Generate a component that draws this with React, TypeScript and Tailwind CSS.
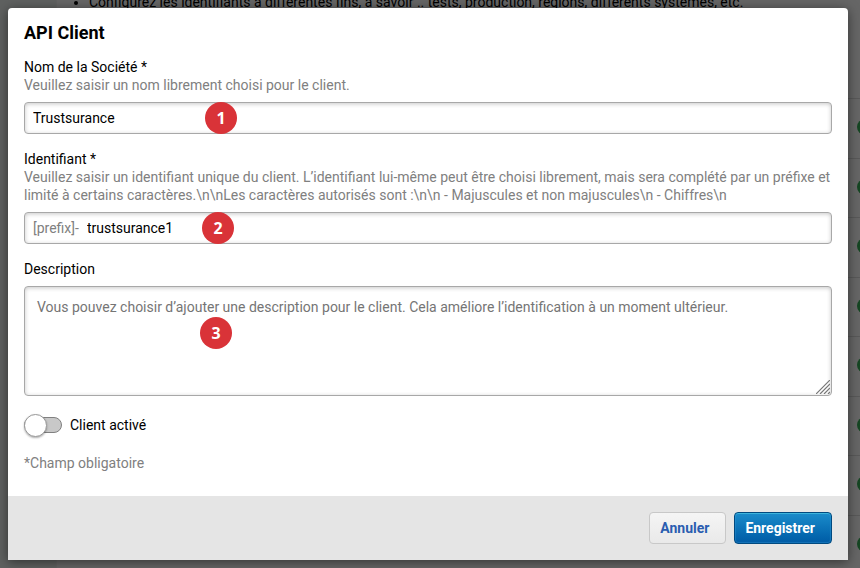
import { useState } from "react";
import type { ReactNode } from "react";

const clients = [1, 2, 3, 4, 5, 6, 7, 8];

const fieldClass =
  "w-full rounded-sm border border-[#a8a8a8] bg-white shadow-[inset_0_1px_4px_rgba(0,0,0,0.22)]";

interface FieldProps {
  id: string;
  label: string;
  help?: string;
  children: ReactNode;
}

const Field = ({ id, label, help, children }: FieldProps) => (
  <div>
    <label htmlFor={id} className="block">
      {label}
    </label>
    {help && <p className="text-[#808080]">{help}</p>}
    <div className="relative mt-2">{children}</div>
  </div>
);

interface StepProps {
  step: number;
  className: string;
}

const Step = ({ step, className }: StepProps) => (
  <span
    className={`absolute flex size-8 items-center justify-center rounded-full bg-[#d93338] font-['Noto_Sans',sans-serif] text-base font-bold text-white ${className}`}
  >
    {step}
  </span>
);

/* Client list behind the dialog */
const ClientList = () => (
  <div className="absolute inset-0 flex overflow-hidden bg-[#edf2ef]">
    <main className="ml-14 flex-1 border-l border-[#f4f4f4] bg-white">
      <ul className="-mt-2 list-disc pl-8 leading-5">
        <li>
          Configurez les identifiants à différentes fins, à savoir .. tests, production, régions,
          differents systèmes, etc.
        </li>
      </ul>
      <ul className="mt-[86px]">
        {clients.map((client) => (
          <li
            key={client}
            className="flex justify-end border-t border-[#dedede] pt-5 odd:h-[60px] even:h-[59px]"
          >
            <span className="-mr-[13px] size-4 shrink-0 rounded-full bg-[#38b058]" />
          </li>
        ))}
      </ul>
    </main>
  </div>
);

const App = () => {
  const [name, setName] = useState("Trustsurance");
  const [identifier, setIdentifier] = useState("trustsurance1");
  const [description, setDescription] = useState("");
  const [active, setActive] = useState(false);

  return (
    <div className="relative min-h-screen font-[Roboto,sans-serif] text-sm leading-[18px] text-black">
      <ClientList />

      <div className="relative min-h-screen overflow-hidden bg-black/60 px-2 pt-2 pr-3">
        <form
          role="dialog"
          aria-labelledby="dialog-title"
          className="rounded-t-sm bg-white shadow-[0_2px_12px_rgba(0,0,0,0.5)]"
          onSubmit={(e) => e.preventDefault()}
        >
          {/* Form fields */}
          <div className="flex flex-col gap-4 px-4 pt-4 pb-6">
            <h2 id="dialog-title" className="text-lg leading-[18px] font-bold">
              API Client
            </h2>

            <Field
              id="name"
              label="Nom de la Société *"
              help="Veuillez saisir un nom librement choisi pour le client."
            >
              <input
                id="name"
                value={name}
                onChange={(e) => setName(e.target.value)}
                className={`${fieldClass} block h-8 px-2`}
              />
              <Step step={1} className="top-0 left-[181px]" />
            </Field>

            <Field
              id="identifier"
              label="Identifiant *"
              help="Veuillez saisir un identifiant unique du client. L’identifiant lui-même peut être choisi librement, mais sera complété par un préfixe et limité à certains caractères.\n\nLes caractères autorisés sont :\n\n - Majuscules et non majuscules\n - Chiffres\n"
            >
              <div className={`${fieldClass} flex h-8 items-center gap-2 px-2`}>
                <span className="text-[#808080]">[prefix]-</span>
                <input
                  id="identifier"
                  value={identifier}
                  onChange={(e) => setIdentifier(e.target.value)}
                  className="min-w-0 flex-1 bg-transparent outline-none"
                />
              </div>
              <Step step={2} className="top-0 left-[178px]" />
            </Field>

            <Field id="description" label="Description">
              <textarea
                id="description"
                value={description}
                onChange={(e) => setDescription(e.target.value)}
                placeholder="Vous pouvez choisir d’ajouter une description pour le client. Cela améliore l’identification à un moment ultérieur."
                className={`${fieldClass} block h-[110px] resize-none px-3 py-[11px] placeholder:text-[#757575]`}
              />
              <svg
                className="pointer-events-none absolute right-0.5 bottom-0.5"
                width="14"
                height="14"
                viewBox="0 0 14 14"
                stroke="#777"
                strokeWidth="1.2"
              >
                <path d="M0 14L14 0M4 14L14 4M8 14L14 8M12 14L14 12" />
              </svg>
              <Step step={3} className="top-[31px] left-44" />
            </Field>

            <label className="flex h-[26px] items-center gap-2">
              <input
                type="checkbox"
                role="switch"
                checked={active}
                onChange={(e) => setActive(e.target.checked)}
                className="relative h-4 w-[38px] appearance-none rounded-full border border-[#808080] bg-[#c8c8c8] before:absolute before:-top-1 before:-left-px before:size-[23px] before:rounded-full before:border before:border-[#999] before:bg-white before:shadow-[0_1px_2px_rgba(0,0,0,0.3)] checked:bg-[#0a6fb5] checked:before:left-3.5"
              />
              Client activé
            </label>

            <p className="text-[#808080]">*Champ obligatoire</p>
          </div>

          {/* Actions */}
          <div className="flex justify-end gap-2 bg-[#e5e5e5] p-4">
            <button
              type="button"
              className="h-8 rounded-sm border border-[#c8c8c8] bg-linear-to-b from-[#f5f5f5] to-[#e9e9e9] pr-4 pl-2.5 font-bold text-[#2a5db0]"
            >
              Annuler
            </button>
            <button
              type="submit"
              className="h-8 rounded-sm border border-[#004a80] bg-linear-to-b from-[#1a8ccb] to-[#005ba5] pr-4 pl-2.5 font-bold text-white shadow-[inset_0_1px_0_#3cb4dc,inset_0_0_1px_1px_rgba(60,160,220,0.35)]"
            >
              Enregistrer
            </button>
          </div>
        </form>
      </div>
    </div>
  );
};

export default App;
